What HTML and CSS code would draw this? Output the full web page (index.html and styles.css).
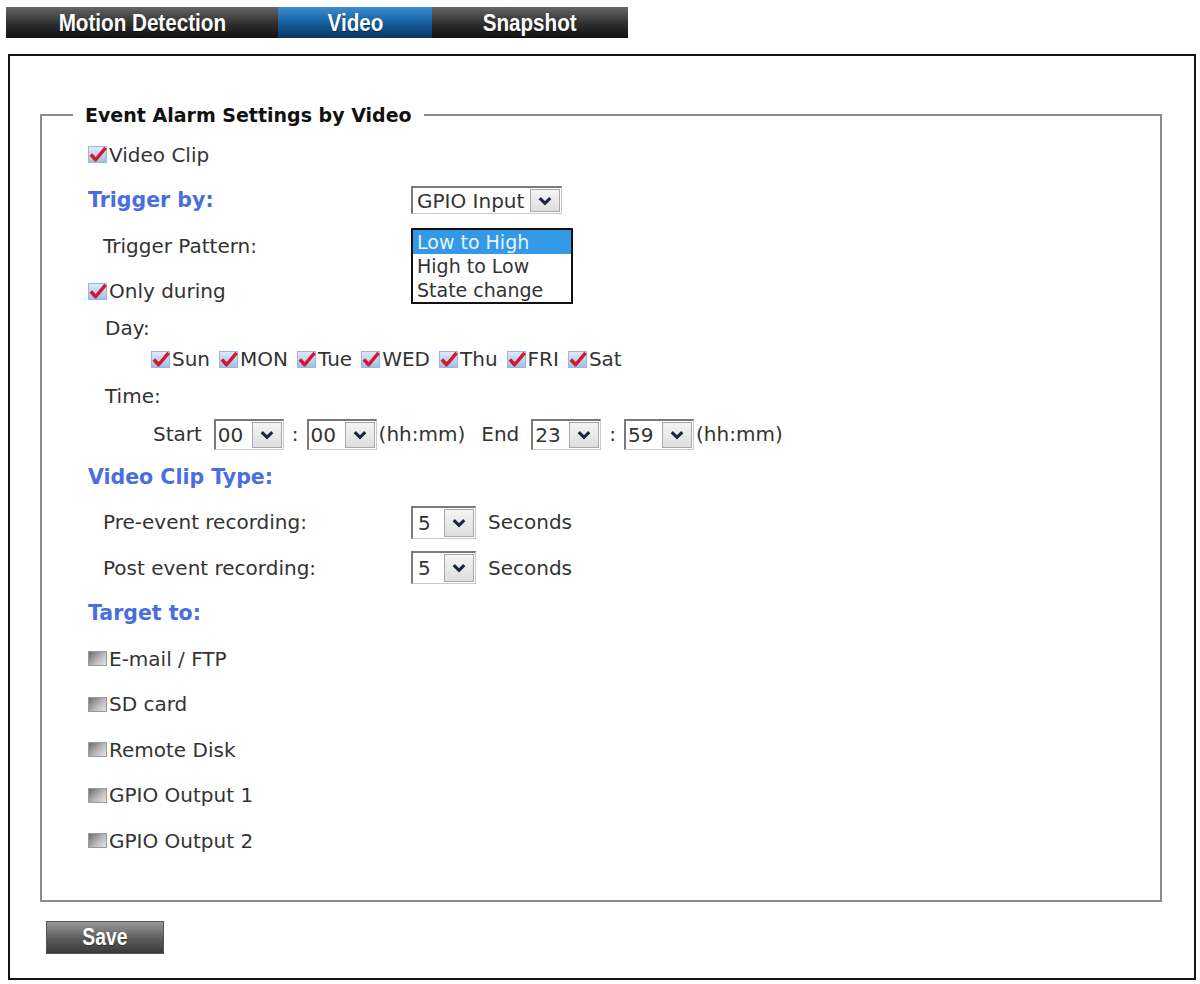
FILE: index.html
```html
<!DOCTYPE html>
<html lang="en">
<head>
  <meta charset="UTF-8">
  <title>Event Alarm - Video</title>
  <link rel="stylesheet" href="styles.css">
</head>
<body>
  <div class="tabs">
    <a class="tab tab-motion"><span>Motion Detection</span></a>
    <a class="tab tab-video active"><span>Video</span></a>
    <a class="tab tab-snap"><span>Snapshot</span></a>
  </div>

  <div class="panel">
    <fieldset>
      <legend>Event Alarm Settings by Video</legend>

      <div class="row">
        <span class="cb on"><svg viewBox="0 0 20 17"><path d="M3 8.5 L8 14 L18.5 1.5"/></svg></span>Video Clip
      </div>

      <div class="row">
        <span class="label head">Trigger by:</span>
        <span class="select sel-gpio">
          <span class="val">GPIO Input</span>
          <span class="arrow"><svg viewBox="0 0 12 8"><path d="M1.5 1.5 L6 6 L10.5 1.5"/></svg></span>
        </span>
      </div>

      <div class="row">
        <span class="label sub">Trigger Pattern:</span>
        <ul class="listbox">
          <li class="picked">Low to High</li>
          <li>High to Low</li>
          <li>State change</li>
        </ul>
      </div>

      <div class="row">
        <span class="cb on"><svg viewBox="0 0 20 17"><path d="M3 8.5 L8 14 L18.5 1.5"/></svg></span>Only during
      </div>

      <div class="row row-day">
        <span class="sub-day">Day:</span>
      </div>

      <div class="row row-days">
        <label class="day"><span class="cb on"><svg viewBox="0 0 20 17"><path d="M3 8.5 L8 14 L18.5 1.5"/></svg></span>Sun</label>
        <label class="day"><span class="cb on"><svg viewBox="0 0 20 17"><path d="M3 8.5 L8 14 L18.5 1.5"/></svg></span>MON</label>
        <label class="day"><span class="cb on"><svg viewBox="0 0 20 17"><path d="M3 8.5 L8 14 L18.5 1.5"/></svg></span>Tue</label>
        <label class="day"><span class="cb on"><svg viewBox="0 0 20 17"><path d="M3 8.5 L8 14 L18.5 1.5"/></svg></span>WED</label>
        <label class="day"><span class="cb on"><svg viewBox="0 0 20 17"><path d="M3 8.5 L8 14 L18.5 1.5"/></svg></span>Thu</label>
        <label class="day"><span class="cb on"><svg viewBox="0 0 20 17"><path d="M3 8.5 L8 14 L18.5 1.5"/></svg></span>FRI</label>
        <label class="day"><span class="cb on"><svg viewBox="0 0 20 17"><path d="M3 8.5 L8 14 L18.5 1.5"/></svg></span>Sat</label>
      </div>

      <div class="row row-time">
        <span class="sub-day">Time:</span>
      </div>

      <div class="row row-start">
        <span>Start</span>
        <span class="select sel-hm first">
          <span class="val">00</span>
          <span class="arrow"><svg viewBox="0 0 12 8"><path d="M1.5 1.5 L6 6 L10.5 1.5"/></svg></span>
        </span>
        <span class="colon">:</span>
        <span class="select sel-hm">
          <span class="val">00</span>
          <span class="arrow"><svg viewBox="0 0 12 8"><path d="M1.5 1.5 L6 6 L10.5 1.5"/></svg></span>
        </span>
        <span class="unit">(hh:mm)</span>
        <span class="end">End</span>
        <span class="select sel-hm first">
          <span class="val">23</span>
          <span class="arrow"><svg viewBox="0 0 12 8"><path d="M1.5 1.5 L6 6 L10.5 1.5"/></svg></span>
        </span>
        <span class="colon">:</span>
        <span class="select sel-hm">
          <span class="val">59</span>
          <span class="arrow"><svg viewBox="0 0 12 8"><path d="M1.5 1.5 L6 6 L10.5 1.5"/></svg></span>
        </span>
        <span class="unit">(hh:mm)</span>
      </div>

      <div class="row">
        <span class="label head">Video Clip Type:</span>
      </div>

      <div class="row">
        <span class="label sub">Pre-event recording:</span>
        <span class="select sel-sec">
          <span class="val">5</span>
          <span class="arrow"><svg viewBox="0 0 12 8"><path d="M1.5 1.5 L6 6 L10.5 1.5"/></svg></span>
        </span>
        <span class="secs">Seconds</span>
      </div>

      <div class="row">
        <span class="label sub">Post event recording:</span>
        <span class="select sel-sec">
          <span class="val">5</span>
          <span class="arrow"><svg viewBox="0 0 12 8"><path d="M1.5 1.5 L6 6 L10.5 1.5"/></svg></span>
        </span>
        <span class="secs">Seconds</span>
      </div>

      <div class="row">
        <span class="label head">Target to:</span>
      </div>

      <div class="row"><span class="cb off"></span>E-mail / FTP</div>
      <div class="row"><span class="cb off"></span>SD card</div>
      <div class="row"><span class="cb off"></span>Remote Disk</div>
      <div class="row"><span class="cb off"></span>GPIO Output 1</div>
      <div class="row"><span class="cb off"></span>GPIO Output 2</div>
    </fieldset>

    <button class="save"><span>Save</span></button>
  </div>
</body>
</html>
```

FILE: styles.css
```css
body {
  margin: 0;
  font-family: "DejaVu Sans", Verdana, sans-serif;
  font-size: 20px;
  color: #333;
  background: #fff;
}

/* top tab strip */
.tabs {
  display: flex;
  width: 622px;
  height: 31px;
  margin: 7px 0 0 6px;
  background: linear-gradient(#666, #2e2e2e 55%, #111);
}

.tab {
  color: #fff;
  font-family: "Liberation Sans", Arial, sans-serif;
  font-weight: bold;
  font-size: 24px;
  line-height: 31px;
  text-align: center;
  text-shadow: 0 1px 1px rgba(0,0,0,0.5);
  white-space: nowrap;
}

.tab span {
  display: inline-block;
  transform: scaleX(0.86);
}

.tab-motion {
  width: 272px;
}

.tab-video {
  width: 154px;
}

.tab-snap {
  flex: 1;
}

.tab.active {
  background: linear-gradient(#3a8fd0, #15609e 50%, #0a3563);
}

/* main panel */
.panel {
  box-sizing: border-box;
  width: 1188px;
  margin: 16px 0 0 8px;
  border: 2px solid #151515;
  padding: 47px 32px 24px 30px;
}

fieldset {
  margin: 0;
  border: 2px solid #8c8c8c;
  padding: 5px 20px 36px 46px;
}

legend {
  font-weight: bold;
  font-size: 19px;
  line-height: 24px;
  color: #111;
  padding: 0 12px;
  margin-left: -15px;
}

.row {
  display: flex;
  align-items: center;
  height: 45.5px;
  white-space: nowrap;
}

.row-day { height: 27px; }
.row-days { height: 36px; padding-left: 63px; }
.row-time { height: 37px; }
.row-start { height: 40px; padding-left: 65px; }

.label {
  box-sizing: border-box;
  width: 323px;
  flex-shrink: 0;
}

.head {
  color: #4a6ee0;
  font-weight: bold;
  font-size: 20.5px;
}

.sub {
  padding-left: 15px;
}

.sub-day {
  padding-left: 17px;
}

/* checkboxes */
.cb {
  display: inline-block;
  box-sizing: border-box;
  flex-shrink: 0;
}

.cb.on {
  width: 19px;
  height: 17px;
  margin-right: 2px;
  border: 1px solid #9ab6da;
  background: linear-gradient(#dceaf8, #9fc1e6);
  position: relative;
}

.cb.on svg {
  position: absolute;
  left: -1px;
  top: -1px;
  width: 19px;
  height: 17px;
  overflow: visible;
}

.cb.on path {
  fill: none;
  stroke: #d61530;
  stroke-width: 3.6;
  stroke-linejoin: round;
}

.cb.off {
  width: 19px;
  height: 15px;
  margin-right: 2px;
  border: 1px solid #9a9a9a;
  background: linear-gradient(135deg, #6a6a6a, #b8b8b8 55%, #e4e4e4);
}

.day {
  display: flex;
  align-items: center;
  margin-right: 9px;
}

/* fake select boxes */
.select {
  display: inline-flex;
  box-sizing: border-box;
  align-items: stretch;
  border-top: 2px solid #7a7a7a;
  border-left: 2px solid #7a7a7a;
  border-right: 1px solid #c8c8c8;
  border-bottom: 1px solid #c8c8c8;
  background: #fff;
  font-size: 20px;
  flex-shrink: 0;
}

.select .val {
  flex: 1;
  padding-left: 5px;
  display: flex;
  align-items: center;
}

.select .arrow {
  width: 28px;
  display: flex;
  align-items: center;
  justify-content: center;
  background: linear-gradient(#f4f4f4, #dedede);
  border: 1px solid #a8a8a8;
  margin: 1px;
}

.select .arrow svg {
  width: 14px;
  height: 10px;
}

.select .arrow path {
  fill: none;
  stroke: #1a2540;
  stroke-width: 2.6;
}

.sel-gpio {
  width: 151px;
  height: 28px;
}

.sel-gpio .val {
  padding-left: 4px;
}

.sel-hm {
  width: 70px;
  height: 31px;
}

.sel-hm .val {
  padding-left: 2px;
}

.sel-hm.first {
  margin-left: 12px;
}

.colon {
  margin: 0 8px;
}

.unit {
  margin-left: 2px;
}

.end {
  margin-left: 16px;
}

.sel-sec {
  width: 65px;
  height: 33px;
}

.secs {
  margin-left: 12px;
}

/* open list under Trigger Pattern */
.listbox {
  align-self: flex-start;
  margin: 5px 0 0;
  padding: 0;
  list-style: none;
  width: 162px;
  box-sizing: border-box;
  border: 2px solid #111;
  background: #fff;
  font-size: 19px;
  line-height: 24px;
  position: relative;
  z-index: 1;
}

.listbox li {
  padding-left: 4px;
}

.listbox .picked {
  background: #3399e6;
  color: #e8f4ff;
}

/* save button */
.save {
  display: block;
  width: 118px;
  height: 33px;
  margin: 19px 0 0 6px;
  padding: 0;
  border: 1px solid #555;
  background: linear-gradient(#9a9a9a, #5a5a5a 55%, #3a3a3a);
  color: #fff;
  font-family: "Liberation Sans", Arial, sans-serif;
  font-weight: bold;
  font-size: 23px;
  text-shadow: 0 1px 1px rgba(0,0,0,0.4);
  cursor: pointer;
}

.save span {
  display: inline-block;
  transform: scaleX(0.84);
}
```
